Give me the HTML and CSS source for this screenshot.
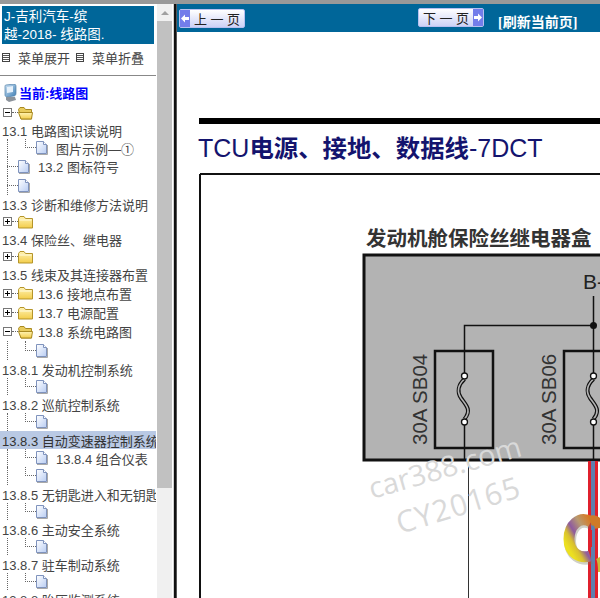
FILE: index.html

```html
<!DOCTYPE html>
<html lang="zh-CN">
<head>
    <meta charset="UTF-8">
    <title>线路图</title>
    <link rel="stylesheet" href="styles.css">
</head>
<body>
    <svg class="defs" width="0" height="0">
        <defs>
            <linearGradient id="docFill" x1="0" y1="0" x2="1" y2="1">
                <stop offset="0" stop-color="#ffffff"/>
                <stop offset="1" stop-color="#b9cdf3"/>
            </linearGradient>
            <linearGradient id="folderFill" x1="0" y1="0" x2="0" y2="1">
                <stop offset="0" stop-color="#fff3b4"/>
                <stop offset="1" stop-color="#f3cd4a"/>
            </linearGradient>
            <linearGradient id="pcFill" x1="0" y1="0" x2="1" y2="1">
                <stop offset="0" stop-color="#cfe4f6"/>
                <stop offset="1" stop-color="#3f7fb5"/>
            </linearGradient>
        </defs>
        <symbol id="doc" viewBox="0 0 12 14">
            <path d="M.5.5H7.5L10.5 3.5V12.5H.5Z" fill="url(#docFill)" stroke="#7f93bd"/>
            <path d="M7.5 .5V3.5H10.5" fill="#fff" stroke="#7f93bd"/>
            <path d="M1 13.5H11.5V4" fill="none" stroke="#a9a9a9"/>
        </symbol>
        <symbol id="folder" viewBox="0 0 15 14">
            <path d="M.5 3.5 2 1.5H6L7.5 3.5H14.5V13H.5Z" fill="url(#folderFill)" stroke="#b5952a"/>
            <path d="M1.5 5H13.5" stroke="#fffbe0"/>
        </symbol>
        <symbol id="folderOpen" viewBox="0 0 15 14">
            <path d="M.5 3.5 2 1.5H6L7.5 3.5H13.5V13H3Z" fill="#e8cb5c" stroke="#a98a22"/>
            <path d="M.5 6.5H14.5L13.5 13H3Z" fill="url(#folderFill)" stroke="#a98a22"/>
        </symbol>
        <symbol id="plus" viewBox="0 0 9 9">
            <rect x=".5" y=".5" width="8" height="8" fill="#fff" stroke="#777"/>
            <path d="M2 4.5H7M4.5 2V7" stroke="#000"/>
        </symbol>
        <symbol id="minus" viewBox="0 0 9 9">
            <rect x=".5" y=".5" width="8" height="8" fill="#fff" stroke="#777"/>
            <path d="M2 4.5H7" stroke="#000"/>
        </symbol>
    </svg>

    <div class="topstrip"></div>
    <div class="frames">
        <div class="sidebar">
            <div class="side-inner">
                <div class="book-title">J-吉利汽车-缤<br>越-2018- 线路图.</div>
                <div class="menu-links">
                    <span class="menu-box"></span><span class="menu-link">菜单展开</span>
                    <span class="menu-box"></span><span class="menu-link">菜单折叠</span>
                </div>
                <div class="side-rule"></div>
                <div class="current">
                    <svg class="pc" width="14" height="18" viewBox="0 0 14 18">
                        <path d="M3 1 11 0C13 0 13 2 13 3V9C13 11 12 12 11 12L4 13C3 13 2 12 2 11V3C2 2 2 1 3 1Z" fill="url(#pcFill)" stroke="#4f7ea6" stroke-width=".7"/>
                        <path d="M4 3 10 2V8L4 9Z" fill="#e6f1fb"/>
                        <path d="M3 13H12L13 16 6 18 3 16Z" fill="#8c939b"/>
                    </svg>
                    <span>当前:线路图</span>
                </div>

                <div class="tree">
                    <div class="row h17"><svg class="box"><use href="#minus"/></svg><i class="dash d6"></i><svg class="ico"><use href="#folderOpen"/></svg></div>
                    <div class="row h18 t">13.1 电路图识读说明</div>
                    <div class="row h18"><i class="v"></i><i class="v2"></i><svg class="doc"><use href="#doc"/></svg><span class="lbl">图片示例—①</span></div>
                    <div class="row h19"><i class="vb"></i><svg class="doc"><use href="#doc"/></svg><span class="lbl">13.2 图标符号</span></div>
                    <div class="row h19"><i class="vb"></i><svg class="doc"><use href="#doc"/></svg></div>
                    <div class="row h18 t">13.3 诊断和维修方法说明</div>
                    <div class="row h17"><svg class="box"><use href="#plus"/></svg><i class="dash d6"></i><svg class="ico"><use href="#folder"/></svg></div>
                    <div class="row h18 t">13.4 保险丝、继电器</div>
                    <div class="row h17"><svg class="box"><use href="#plus"/></svg><i class="dash d6"></i><svg class="ico"><use href="#folder"/></svg></div>
                    <div class="row h18 t">13.5 线束及其连接器布置</div>
                    <div class="row h20"><svg class="box"><use href="#plus"/></svg><i class="dash d6"></i><svg class="ico"><use href="#folder"/></svg><span class="lbl">13.6 接地点布置</span></div>
                    <div class="row h19"><svg class="box"><use href="#plus"/></svg><i class="dash d6"></i><svg class="ico"><use href="#folder"/></svg><span class="lbl">13.7 电源配置</span></div>
                    <div class="row h19"><svg class="box"><use href="#minus"/></svg><i class="dash d6"></i><svg class="ico"><use href="#folderOpen"/></svg><span class="lbl">13.8 系统电路图</span></div>
                    <div class="row h19"><i class="v"></i><i class="v2"></i><svg class="doc"><use href="#doc"/></svg></div>
                    <div class="row h18 t">13.8.1 发动机控制系统</div>
                    <div class="row h17"><i class="v"></i><i class="v2"></i><svg class="doc"><use href="#doc"/></svg></div>
                    <div class="row h18 t">13.8.2 巡航控制系统</div>
                    <div class="row h18"><i class="v"></i><i class="v2"></i><svg class="doc"><use href="#doc"/></svg></div>
                    <div class="row h18 t selected">13.8.3 自动变速器控制系统</div>
                    <div class="row h18"><i class="v"></i><i class="v2"></i><svg class="doc"><use href="#doc"/></svg><span class="lbl">13.8.4 组合仪表</span></div>
                    <div class="row h18"><i class="v"></i><i class="v2"></i><svg class="doc"><use href="#doc"/></svg></div>
                    <div class="row h18 t">13.8.5 无钥匙进入和无钥匙启动系统</div>
                    <div class="row h17"><i class="v"></i><i class="v2"></i><svg class="doc"><use href="#doc"/></svg></div>
                    <div class="row h18 t">13.8.6 主动安全系统</div>
                    <div class="row h17"><i class="v"></i><i class="v2"></i><svg class="doc"><use href="#doc"/></svg></div>
                    <div class="row h18 t">13.8.7 驻车制动系统</div>
                    <div class="row h17"><i class="v"></i><i class="v2"></i><svg class="doc"><use href="#doc"/></svg></div>
                    <div class="row h18 t">13.8.8 胎压监测系统</div>
                </div>
            </div>
            <div class="scrollbar">
                <div class="arrow"></div>
                <div class="thumb"></div>
            </div>
        </div>
        <div class="divider"></div>
        <div class="main">
            <div class="toolbar">
                <div class="page-btn prev">
                    <span class="btn-arrow"><svg width="8" height="9" viewBox="0 0 8 9"><path d="M0 4.5 4 .5V3H8V6H4V8.5Z" fill="#fff"/></svg></span>
                    <span class="btn-text">上 一 页</span>
                </div>
                <div class="page-btn next">
                    <span class="btn-text">下 一 页</span>
                    <span class="btn-arrow"><svg width="8" height="9" viewBox="0 0 8 9"><path d="M8 4.5 4 .5V3H0V6H4V8.5Z" fill="#fff"/></svg></span>
                </div>
                <a class="refresh">[刷新当前页]</a>
            </div>
            <div class="content">
                <div class="heavy-rule"></div>
                <h2 class="doc-title">TCU<b>电源、接地、数据线</b>-7DCT</h2>
                <svg class="diagram" width="423" height="425" viewBox="199 173 423 425">
                    <defs>
                        <linearGradient id="ring" x1="0" y1="1" x2="1" y2="0">
                            <stop offset=".1" stop-color="#ece020"/>
                            <stop offset=".28" stop-color="#d8c030"/>
                            <stop offset=".45" stop-color="#8e5aa0"/>
                            <stop offset=".7" stop-color="#b89a70"/>
                            <stop offset="1" stop-color="#d9781e"/>
                        </linearGradient>
                    </defs>
                    <path d="M200 174H622M200 174V598" fill="none" stroke="#111" stroke-width="2"/>
                    <text x="366" y="246" class="box-title">发动机舱保险丝继电器盒</text>
                    <rect x="364" y="255" width="270" height="205" fill="#b3b3b3" stroke="#111" stroke-width="3"/>
                    <text x="583" y="289" class="pin">B-</text>

                    <path d="M593.5 296V376M593.5 422V460M464.5 376V325.5H593.5M464.5 422V460" fill="none" stroke="#111" stroke-width="1.5"/>
                    <path d="M468.5 461V598" fill="none" stroke="#333" stroke-width="1"/>
                    <circle cx="593.5" cy="325.5" r="3.5" fill="#111"/>

                    <rect x="435" y="351" width="58" height="97" fill="none" stroke="#111" stroke-width="2.5"/>
                    <rect x="564" y="351" width="58" height="97" fill="none" stroke="#111" stroke-width="2.5"/>

                    <path d="M464.5 379C458 385 457 392 461 398C466 405 472 410 464.5 419" fill="none" stroke="#111" stroke-width="4"/>
                    <path d="M464.5 379C458 385 457 392 461 398C466 405 472 410 464.5 419" fill="none" stroke="#b3b3b3" stroke-width="1.6"/>
                    <path d="M593.5 379C587 385 586 392 590 398C595 405 601 410 593.5 419" fill="none" stroke="#111" stroke-width="4"/>
                    <path d="M593.5 379C587 385 586 392 590 398C595 405 601 410 593.5 419" fill="none" stroke="#b3b3b3" stroke-width="1.6"/>
                    <circle cx="464.5" cy="376" r="3" fill="#fff" stroke="#111" stroke-width="1.3"/>
                    <circle cx="464.5" cy="422" r="3" fill="#fff" stroke="#111" stroke-width="1.3"/>
                    <circle cx="593.5" cy="376" r="3" fill="#fff" stroke="#111" stroke-width="1.3"/>
                    <circle cx="593.5" cy="422" r="3" fill="#fff" stroke="#111" stroke-width="1.3"/>

                    <text class="fuse" transform="translate(427 445) rotate(-90)">30A SB04</text>
                    <text class="fuse" transform="translate(556 445) rotate(-90)">30A SB06</text>

                    <rect x="588" y="461" width="3" height="137" fill="#e0202c"/>
                    <rect x="591" y="461" width="4" height="137" fill="#5f7fae"/>
                    <rect x="595" y="461" width="3" height="137" fill="#e0202c"/>

                    <!-- ring logo sits over the wires -->
                    <path d="M592 524C580 517 570 527 570 541C570 555 581 561 591 558" fill="none" stroke="#77775f" stroke-width="12" opacity=".35"/>
                    <path d="M591 522C579 515 569 526 569 539C569 553 580 559 590 556" fill="none" stroke="url(#ring)" stroke-width="11"/>
                    <path d="M590 521C595 519 599 522 600 528" fill="none" stroke="#cf7a28" stroke-width="10"/>
                    <path d="M598 558C600 562 600 568 600 572" fill="none" stroke="#c8b838" stroke-width="4"/>
                    <rect x="588" y="530" width="4" height="17" fill="#e0202c"/>

                    <text class="mark" transform="translate(372 499) rotate(-16)">car388.com</text>
                    <text class="mark wide" transform="translate(400 534) rotate(-17)">CY20165</text>
                </svg>
            </div>
        </div>
    </div>
</body>
</html>
```

FILE: styles.css

```css
* {
    box-sizing: border-box;
}

html, body {
    margin: 0;
    padding: 0;
    height: 100%;
    overflow: hidden;
    background-color: #fff;
}

body {
    font-family: "Liberation Sans", "Noto Sans CJK SC", sans-serif;
    display: flex;
    flex-direction: column;
}

.defs {
    position: absolute;
}

.topstrip {
    height: 4px;
    background-color: #999;
    flex: none;
}

.frames {
    display: flex;
    flex: 1;
    min-height: 0;
}

/* left frame */
.sidebar {
    width: 173px;
    display: flex;
    flex: none;
    overflow: hidden;
}

.side-inner {
    width: 156px;
    flex: none;
    padding-top: 2px;
    overflow: hidden;
}

.book-title {
    margin-left: 2px;
    width: 152px;
    height: 38px;
    padding: 2px 0 0 2px;
    background-color: #006699;
    color: #fff;
    font-size: 13.5px;
    line-height: 18px;
    white-space: nowrap;
}

.menu-links {
    height: 27px;
    display: flex;
    align-items: center;
    padding-left: 2px;
    color: #444;
    font-size: 13px;
}

.menu-box {
    width: 8px;
    height: 9px;
    border: 1px solid #444;
    background: repeating-linear-gradient(#fff 0 1px, #555 1px 2px);
    margin-right: 8px;
}

.menu-link {
    margin-right: 6px;
}

.side-rule {
    height: 1px;
    background-color: #888;
    margin-top: 4px;
}

.current {
    height: 23px;
    margin-top: 5px;
    display: flex;
    align-items: center;
    padding-left: 3px;
    gap: 2px;
    color: #0000ff;
    font-size: 13px;
    font-weight: bold;
}

.pc {
    flex: none;
}

.row {
    display: flex;
    align-items: center;
    white-space: nowrap;
    overflow: hidden;
    color: #444;
    font-size: 13px;
}

.h17 { height: 17px; }
.h18 { height: 18px; }
.h19 { height: 19px; }
.h20 { height: 20px; }

.t {
    padding-left: 2px;
}

.selected {
    background-color: #b9c9e4;
    color: #333;
}

.box {
    width: 9px;
    height: 9px;
    margin-left: 3px;
    flex: none;
}

.dash {
    height: 1px;
    border-top: 1px dotted #666;
    flex: none;
}

.d6 {
    width: 6px;
}

.ico {
    width: 15px;
    height: 14px;
    flex: none;
}

.doc {
    width: 12px;
    height: 14px;
    flex: none;
}

.lbl {
    margin-left: 8px;
}

.ico + .lbl {
    margin-left: 5px;
}

/* dotted tree lines */
.v {
    align-self: stretch;
    width: 18px;
    margin-left: 7px;
    border-left: 1px dotted #666;
    flex: none;
}

.v2 {
    align-self: flex-start;
    width: 11px;
    height: 50%;
    border-left: 1px dotted #666;
    border-bottom: 1px dotted #666;
    flex: none;
}

.vb {
    align-self: stretch;
    width: 11px;
    margin-left: 7px;
    flex: none;
    background:
        linear-gradient(#666 1px, transparent 1px) 0 0 / 1px 2px repeat-y,
        linear-gradient(90deg, #666 1px, transparent 1px) 0 50% / 2px 1px repeat-x;
}

.scrollbar {
    width: 15px;
    margin-left: 1px;
    flex: none;
    background-color: #f0f0f0;
    display: flex;
    flex-direction: column;
}

.arrow {
    height: 17px;
    position: relative;
}

.arrow::after {
    content: "";
    position: absolute;
    left: 4px;
    top: 7px;
    border: 4px solid transparent;
    border-top: 0;
    border-bottom: 4px solid #a0a0a0;
}

.thumb {
    height: 467px;
    background-color: #c1c1c1;
}

.divider {
    width: 4px;
    flex: none;
    background: linear-gradient(90deg, #d0d0d0 0 1px, #111 1px 3px, #555 3px);
}

/* right frame */
.main {
    flex: 1;
    min-width: 0;
    overflow: hidden;
}

.toolbar {
    height: 28px;
    background-color: #006699;
    display: flex;
    align-items: flex-start;
    padding-left: 2px;
}

.page-btn {
    width: 66px;
    height: 19px;
    margin-top: 5px;
    display: flex;
    align-items: center;
    background: linear-gradient(#fff, #ccd2f6);
    border: 1px solid #b8c0f0;
    border-radius: 2px;
    color: #222;
    font-size: 13px;
}

.next {
    margin-left: 173px;
    margin-top: 4px;
}

.btn-arrow {
    width: 10px;
    height: 100%;
    background-color: #737dea;
    display: flex;
    align-items: center;
    justify-content: center;
    flex: none;
}

.btn-text {
    flex: 1;
    text-align: center;
}

.refresh {
    margin: 11px 0 0 14px;
    color: #fff;
    font-family: "Liberation Serif", "Noto Sans CJK SC", serif;
    font-size: 14px;
    font-weight: bold;
    line-height: 16px;
}

.content {
    padding: 86px 0 0 22px;
}

.heavy-rule {
    height: 6px;
    background-color: #000;
}

.doc-title {
    margin: 6px 0 0 -1px;
    height: 43px;
    color: #14146e;
    font-size: 25px;
    font-weight: normal;
    line-height: 37px;
    white-space: nowrap;
}

.doc-title b {
    font-weight: bold;
    font-size: 24.4px;
}

.diagram {
    display: block;
}

.box-title {
    font-size: 20.5px;
    font-weight: bold;
    fill: #333;
}

.pin {
    font-size: 21px;
    fill: #222;
}

.fuse {
    font-size: 20.5px;
    fill: #333;
}

.mark {
    font-family: "Open Sans", "Liberation Sans", sans-serif;
    font-size: 29px;
    fill: #d9d9d9;
}

.wide {
    font-size: 30px;
    letter-spacing: 1px;
}
```
